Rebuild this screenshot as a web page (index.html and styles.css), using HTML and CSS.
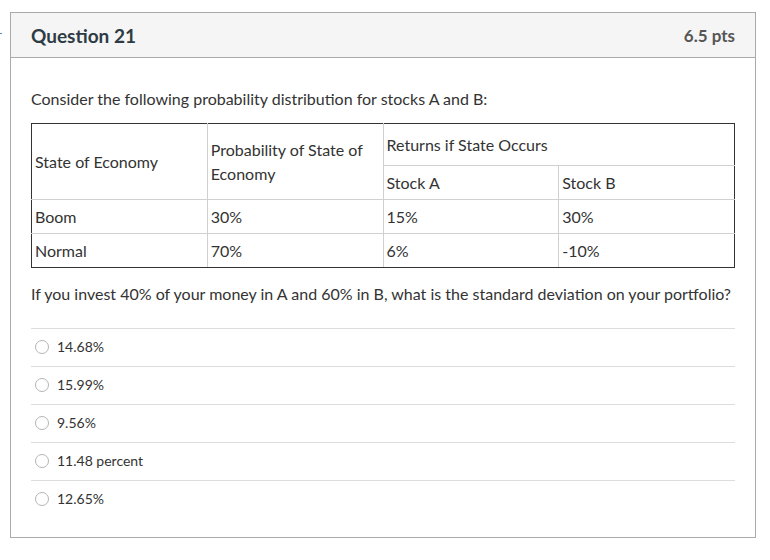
FILE: index.html
```html
<!DOCTYPE html>
<html>
<head>
<meta charset="utf-8">
<link rel="stylesheet" href="styles.css">
</head>
<body>
<div class="page">
  <span class="mark"></span>
  <div class="card">
    <div class="card-header">
      <h2 class="title">Question 21</h2>
      <span class="pts">6.5 pts</span>
    </div>
    <div class="card-body">
      <p class="intro">Consider the following probability distribution for stocks A and B:</p>
      <table class="dist">
        <colgroup><col class="c"><col class="c"><col class="c"><col class="c"></colgroup>
        <tr class="r1">
          <td rowspan="2">State of Economy</td>
          <td rowspan="2">Probability of State of Economy</td>
          <td colspan="2" class="split">Returns if State Occurs</td>
        </tr>
        <tr class="r2">
          <td class="split">Stock A</td>
          <td>Stock B</td>
        </tr>
        <tr>
          <td>Boom</td><td>30%</td><td class="split">15%</td><td>30%</td>
        </tr>
        <tr>
          <td>Normal</td><td>70%</td><td class="split">6%</td><td>-10%</td>
        </tr>
      </table>
      <p class="question">If you invest 40% of your money in A and 60% in B, what is the standard deviation on your portfolio?</p>
      <ul class="answers">
        <li class="answer"><span class="radio"></span><span>14.68%</span></li>
        <li class="answer"><span class="radio"></span><span>15.99%</span></li>
        <li class="answer"><span class="radio"></span><span>9.56%</span></li>
        <li class="answer"><span class="radio"></span><span>11.48 percent</span></li>
        <li class="answer"><span class="radio"></span><span>12.65%</span></li>
      </ul>
    </div>
  </div>
</div>
</body>
</html>
```
FILE: styles.css
```css
html, body {
  margin: 0;
  padding: 0;
  background: #fff;
}
body {
  font-family: Lato, "Open Sans", sans-serif;
  color: #333;
}
.page {
  display: flex;
  align-items: flex-start;
  padding-top: 12px;
}
.mark {
  width: 2px;
  height: 1px;
  margin-top: 21px;
  background: #5b8fc7;
  flex: none;
}
.card {
  margin-left: 8px;
  width: 746px;
  box-sizing: border-box;
  border: 1px solid #aaaaaa;
}
.card-header {
  height: 44px;
  border-bottom: 1px solid #aaaaaa;
  background: #f5f5f5;
  display: flex;
  align-items: center;
  justify-content: space-between;
  padding: 0 20px;
}
.title {
  margin: 0;
  font-size: 19px;
  font-weight: 700;
  color: #2d3b45;
}
.pts {
  font-size: 17px;
  font-weight: 700;
  color: #555;
}
.card-body {
  padding: 0 20px 19px;
}
.intro {
  margin: 0;
  padding-top: 31px;
  font-size: 16px;
  line-height: 20px;
}
.dist {
  margin-top: 14px;
  width: 100%;
  border-collapse: collapse;
  border: 1px solid #333;
  font-size: 16px;
  table-layout: fixed;
}
.dist td {
  border: 1px solid #d0d0d0;
  padding: 0 3px;
  height: 33px;
  line-height: 24px;
  vertical-align: middle;
}
.dist tr.r1 td.split {
  height: 41px;
}
.dist td.split {
  border-left: 1px solid #333;
}
.dist tr:first-child td { border-top: 1px solid #333; }
.dist tr td:first-child { border-left: 1px solid #333; }
.dist tr td:last-child { border-right: 1px solid #333; }
.dist tr:last-child td { border-bottom: 1px solid #333; }
.question {
  margin: 0;
  padding-top: 16px;
  padding-bottom: 24px;
  font-size: 16px;
  line-height: 20px;
}
.answers {
  list-style: none;
  margin: 0;
  padding: 0;
}
.answer {
  box-sizing: border-box;
  height: 38px;
  padding-bottom: 2px;
  border-top: 1px solid #dddddd;
  display: flex;
  align-items: center;
  font-size: 14px;
  color: #333;
}
.radio {
  width: 12px;
  height: 12px;
  border: 1px solid #b5b5b5;
  border-radius: 50%;
  margin-left: 4px;
  margin-right: 8px;
  flex: none;
  background: #fff;
}
```
